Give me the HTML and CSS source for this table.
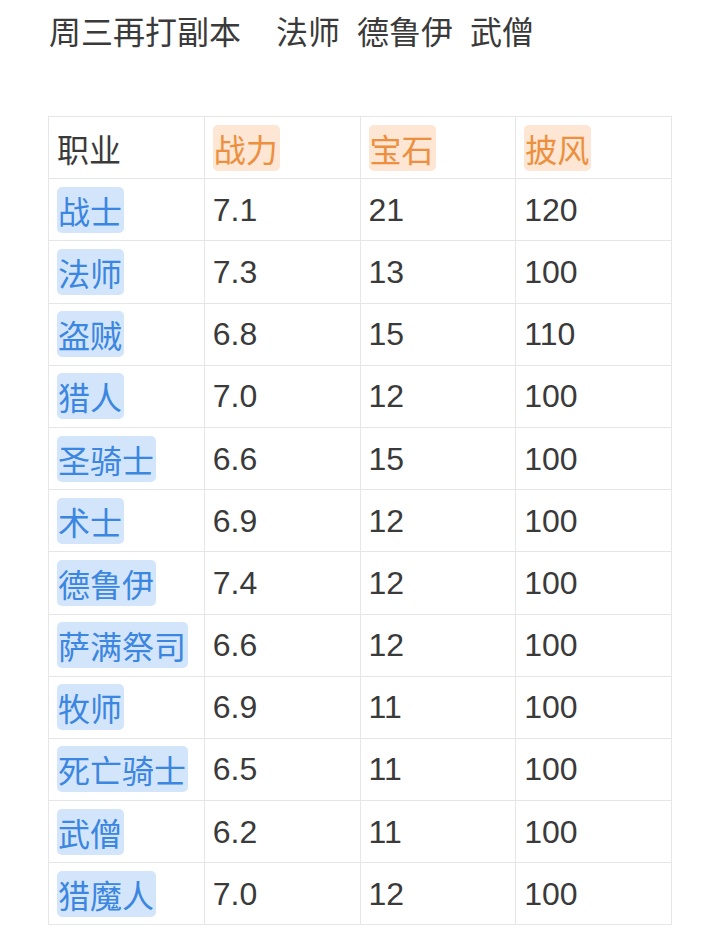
FILE: index.html
```html
<!DOCTYPE html>
<html lang="zh-CN">
<head>
<meta charset="utf-8">
<title>周三再打副本</title>
<link rel="stylesheet" href="styles.css">
</head>
<body>
<div class="page">
  <p class="title"><span>周三再打副本</span><span class="gap-l">法师</span><span class="gap-s">德鲁伊</span><span class="gap-s">武僧</span></p>
  <table class="grid">
    <tr>
      <td>职业</td>
      <td><span class="tag orange">战力</span></td>
      <td><span class="tag orange">宝石</span></td>
      <td><span class="tag orange">披风</span></td>
    </tr>
    <tr><td><span class="tag blue">战士</span></td><td>7.1</td><td>21</td><td>120</td></tr>
    <tr><td><span class="tag blue">法师</span></td><td>7.3</td><td>13</td><td>100</td></tr>
    <tr><td><span class="tag blue">盗贼</span></td><td>6.8</td><td>15</td><td>110</td></tr>
    <tr><td><span class="tag blue">猎人</span></td><td>7.0</td><td>12</td><td>100</td></tr>
    <tr><td><span class="tag blue">圣骑士</span></td><td>6.6</td><td>15</td><td>100</td></tr>
    <tr><td><span class="tag blue">术士</span></td><td>6.9</td><td>12</td><td>100</td></tr>
    <tr><td><span class="tag blue">德鲁伊</span></td><td>7.4</td><td>12</td><td>100</td></tr>
    <tr><td><span class="tag blue">萨满祭司</span></td><td>6.6</td><td>12</td><td>100</td></tr>
    <tr><td><span class="tag blue">牧师</span></td><td>6.9</td><td>11</td><td>100</td></tr>
    <tr><td><span class="tag blue">死亡骑士</span></td><td>6.5</td><td>11</td><td>100</td></tr>
    <tr><td><span class="tag blue">武僧</span></td><td>6.2</td><td>11</td><td>100</td></tr>
    <tr><td><span class="tag blue">猎魔人</span></td><td>7.0</td><td>12</td><td>100</td></tr>
  </table>
</div>
</body>
</html>
```

FILE: styles.css
```css
html, body {
  margin: 0;
  padding: 0;
  background: #ffffff;
}

body {
  font-family: "Liberation Sans", "Noto Sans CJK SC", sans-serif;
  color: #3a3a3a;
  font-size: 32px;
}

.page {
  padding: 7px 48px 0 48px;
}

.title {
  margin: 0 0 0 1px;
  line-height: 46px;
  height: 46px;
  font-family: "Noto Sans CJK SC", sans-serif;
  white-space: nowrap;
}

.gap-l {
  margin-left: 35px;
}

.gap-s {
  margin-left: 17px;
}

.grid {
  margin-top: 63px;
  border-collapse: collapse;
  width: 624px;
  table-layout: fixed;
}

.grid td {
  border: 1px solid #e6e6e6;
  padding: 7.6px 8px;
  height: 46px;
  line-height: 46px;
  vertical-align: top;
  white-space: nowrap;
  overflow: hidden;
}

.grid td:first-child {
  font-family: "Noto Sans CJK SC", sans-serif;
}

.tag {
  display: inline-block;
  vertical-align: top;
  height: 46px;
  padding: 0 2px 0 1px;
  border-radius: 5px;
  line-height: 46px;
  font-family: "Noto Sans CJK SC", sans-serif;
}

.blue {
  background: #d3e5fb;
  color: #3b86e0;
}

.orange {
  background: #fde6d3;
  color: #ec8f3e;
}
```
